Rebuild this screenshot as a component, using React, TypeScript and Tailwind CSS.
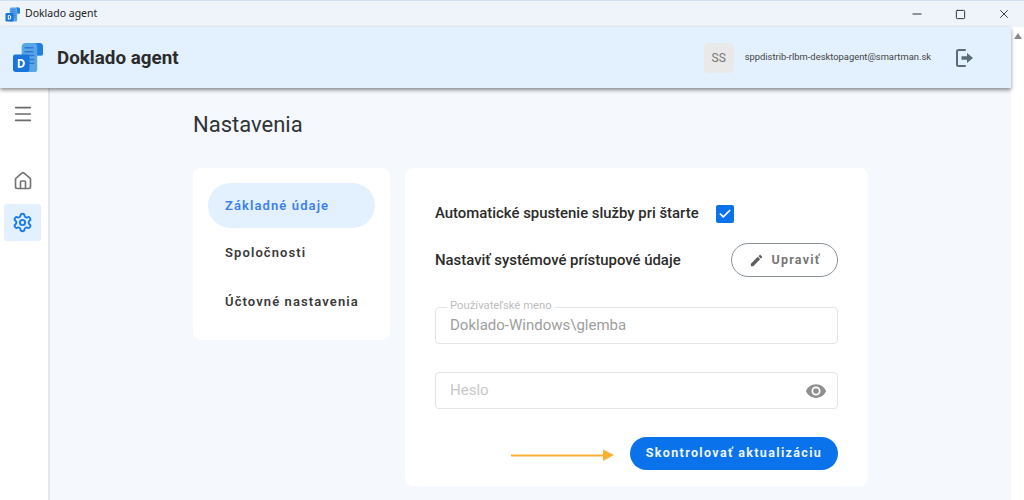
import React from 'react';
import { Check, Home, Menu, Minus, Settings, Square, X } from 'lucide-react';

const font = { fontFamily: 'Roboto, sans-serif' };

const AppLogo = ({ size }: { size: number }) => (
  <svg width={size} height={size} viewBox="0 0 32 32">
    <path d="M10 4a4 4 0 0 1 4-3h14a4 4 0 0 1 4 4v7a2 2 0 0 1-2 2h-4v14a3 3 0 0 1-3 3H10z" fill="#5aa5e8" />
    <path d="M24 1h4a4 4 0 0 1 4 4v7a2 2 0 0 1-2 2h-4V5a4 4 0 0 0-2-4z" fill="#1f7fe0" />
    <path d="M13 6h9M13 10h9M15 14h8M15 18h8M15 22h8" stroke="#2a78cf" strokeWidth="1.5" />
    <rect x="1" y="13" width="17" height="18" rx="2.5" fill="#1976d8" />
    <path d="M6 17.5h3.2c2.6 0 4.1 1.7 4.1 4.5s-1.500 4.500-4.100 4.500H6zM8 19.300v5.400h1.100c1.400 0 2.100-1 2.100-2.700s-.7-2.700-2.100-2.700z" fill="#fff" fillRule="evenodd" />
  </svg>
);

const TitleBar = () => (
  <div className="h-[27px] shrink-0 flex items-center bg-[#eff4fa] border-t border-[#cfe0ee]">
    <div className="ml-[5px]"><AppLogo size={15} /></div>
    <span className="ml-[5px] text-[10.500px] text-[#222]" style={{ fontFamily: '"Noto Sans", sans-serif' }}>Doklado agent</span>
    <div className="ml-auto flex items-center gap-[31px] mr-[13px] text-[#222]">
      <Minus className="w-[14px] h-[14px]" strokeWidth={1.6} />
      <Square className="w-[11px] h-[11px]" strokeWidth={2} />
      <X className="w-[14px] h-[14px]" strokeWidth={1.5} />
    </div>
  </div>
);

const ExitIcon = () => (
  <svg className="ml-[24px] mr-[37px]" width="19" height="20" viewBox="0 0 19 20">
    <path d="M10 2H3.500A1.500 1.500 0 0 0 2 3.500v13A1.500 1.500 0 0 0 3.500 18H10" fill="none" stroke="#5b6b78" strokeWidth="2" strokeLinecap="round" />
    <path d="M6.500 8.300h5.500V5l6 5-6 5v-3.300H6.500z" fill="#5b6b78" />
  </svg>
);

const Header = () => (
  <div className="relative z-10 h-[61px] shrink-0 flex items-center bg-[#e3f0fd] shadow-[0_2px_4px_rgba(0,0,0,0.45)]">
    <div className="ml-[12px]"><AppLogo size={31} /></div>
    <span className="ml-[14px] mt-[1px] text-[18.800px] font-bold text-[#2b2b2b]">Doklado agent</span>
    <div className="ml-auto flex items-center">
      <div className="w-[30px] h-[30px] rounded-[5px] bg-[#e9e9e9] flex items-center justify-center text-[12px] text-[#777]">SS</div>
      <span className="ml-[11px] text-[9.400px] text-[#444]">sppdistrib-rlbm-desktopagent@smartman.sk</span>
      <ExitIcon />
    </div>
  </div>
);

const Sidebar = () => (
  <div className="w-[50px] shrink-0 bg-white border-r-2 border-[#e4e6e9] flex flex-col items-center pr-[3px]">
    <Menu className="mt-[15px] w-[22px] h-[22px] text-[#6b6b6b]" strokeWidth={1.8} />
    <Home className="mt-[46px] w-[20px] h-[20px] text-[#757575]" strokeWidth={2} />
    <div className="mt-[13px] w-[37px] h-[37px] rounded-[3px] bg-[#e3f0fd] flex items-center justify-center">
      <Settings className="w-[21px] h-[21px] text-[#1a7cf0]" strokeWidth={2.2} />
    </div>
  </div>
);

const NavCard = () => (
  <div className="w-[197px] h-[172px] shrink-0 rounded-[8px] bg-white px-[15px] pt-[15px] text-[13px] font-semibold tracking-[1.1px] text-[#3a3a3a]">
    <div className="h-[45px] rounded-full bg-[#e3f0fd] flex items-center pl-[17px] text-[#3d7ff0]">Základné údaje</div>
    <div className="h-[49px] flex items-center pl-[17px]">Spoločnosti</div>
    <div className="h-[49px] flex items-center pl-[17px]">Účtovné nastavenia</div>
  </div>
);

const FormCard = () => (
  <div className="relative w-[463px] h-[318px] shrink-0 rounded-[8px] bg-white pl-[30px] pr-[30px]">
    <div className="h-[33px] mt-[29px] flex items-center">
      <span className="text-[14.900px] font-medium text-[#2b2b2b]">Automatické spustenie služby pri štarte</span>
      <div className="ml-[17px] w-[18px] h-[18px] rounded-[2px] bg-[#0a72ea] flex items-center justify-center">
        <Check className="w-[14px] h-[14px] text-white" strokeWidth={3} />
      </div>
    </div>
    <div className="mt-[13px] h-[34px] flex items-center justify-between">
      <span className="text-[14.900px] font-medium text-[#2b2b2b]">Nastaviť systémové prístupové údaje</span>
      <div className="w-[107px] h-[34px] rounded-full border border-[#8b9298] flex items-center justify-center gap-[8px] text-[12.500px] font-bold tracking-[1.2px] text-[#777]">
        <svg width="15" height="15" viewBox="0 0 24 24" fill="#5f5f5f">
          <path d="M3 17.250V21h3.750L17.810 9.940l-3.750-3.750L3 17.250zM20.710 7.040a1 1 0 0 0 0-1.410l-2.340-2.340a1 1 0 0 0-1.410 0l-1.830 1.830 3.750 3.750 1.830-1.830z" />
        </svg>
        Upraviť
      </div>
    </div>
    <div className="relative mt-[30px] h-[37px] rounded-[4px] border-[1.500px] border-[#e4e4e4] flex items-center pl-[14px] text-[15px] text-[#9e9e9e]">
      Doklado-Windows\glemba
      <span className="absolute -top-[8px] left-[11px] bg-white px-[3px] text-[11.300px] leading-[12px] text-[#bdbdbd]">Používateľské meno</span>
    </div>
    <div className="mt-[28px] h-[37px] rounded-[4px] border-[1.500px] border-[#e4e4e4] flex items-center justify-between pl-[14px] pr-[10px] text-[15px] text-[#c8c8c8]">
      Heslo
      <svg width="22" height="22" viewBox="0 0 24 24" fill="#8f8f8f">
        <path d="M12 4.500C7 4.500 2.730 7.610 1 12c1.730 4.390 6 7.500 11 7.500s9.270-3.110 11-7.500c-1.730-4.390-6-7.500-11-7.500zM12 17a5 5 0 1 1 0-10 5 5 0 0 1 0 10zm0-8a3 3 0 1 0 0 6 3 3 0 0 0 0-6z" />
      </svg>
    </div>
    <div className="mt-[28px] flex justify-end">
      <div className="w-[208px] h-[33px] rounded-full bg-[#0a72ea] flex items-center justify-center text-[12.500px] font-bold tracking-[1.350px] text-[#eef5ff]">
        Skontrolovať aktualizáciu
      </div>
    </div>
    <svg className="absolute left-[106px] top-[280px]" width="104" height="14" viewBox="0 0 104 14">
      <path d="M0 7.500h92" stroke="#fbb034" strokeWidth="2" />
      <path d="M92 1.500l11 5.500-11 6z" fill="#fbb034" />
    </svg>
  </div>
);

export default function App() {
  return (
    <div className="w-[1024px] h-[500px] overflow-hidden flex flex-col bg-white" style={font}>
      <TitleBar />
      <div className="flex flex-1 min-h-0">
        <div className="flex-1 min-w-0 flex flex-col">
          <Header />
          <div className="flex flex-1 min-h-0">
            <Sidebar />
            <div className="flex-1 min-w-0 bg-[#f5f8fc] pl-[143px]">
              <h1 className="mt-[22px] h-[30px] text-[22px] leading-[30px] font-normal text-[#2f3438]">Nastavenia</h1>
              <div className="mt-[28px] flex gap-[15px]">
                <NavCard />
                <FormCard />
              </div>
            </div>
          </div>
        </div>
        <div className="w-[13px] shrink-0 bg-white flex justify-center pt-[6px]">
          <div className="w-0 h-0 border-l-[4px] border-r-[4px] border-b-[6px] border-l-transparent border-r-transparent border-b-[#8a8a8a]" />
        </div>
      </div>
    </div>
  );
}
